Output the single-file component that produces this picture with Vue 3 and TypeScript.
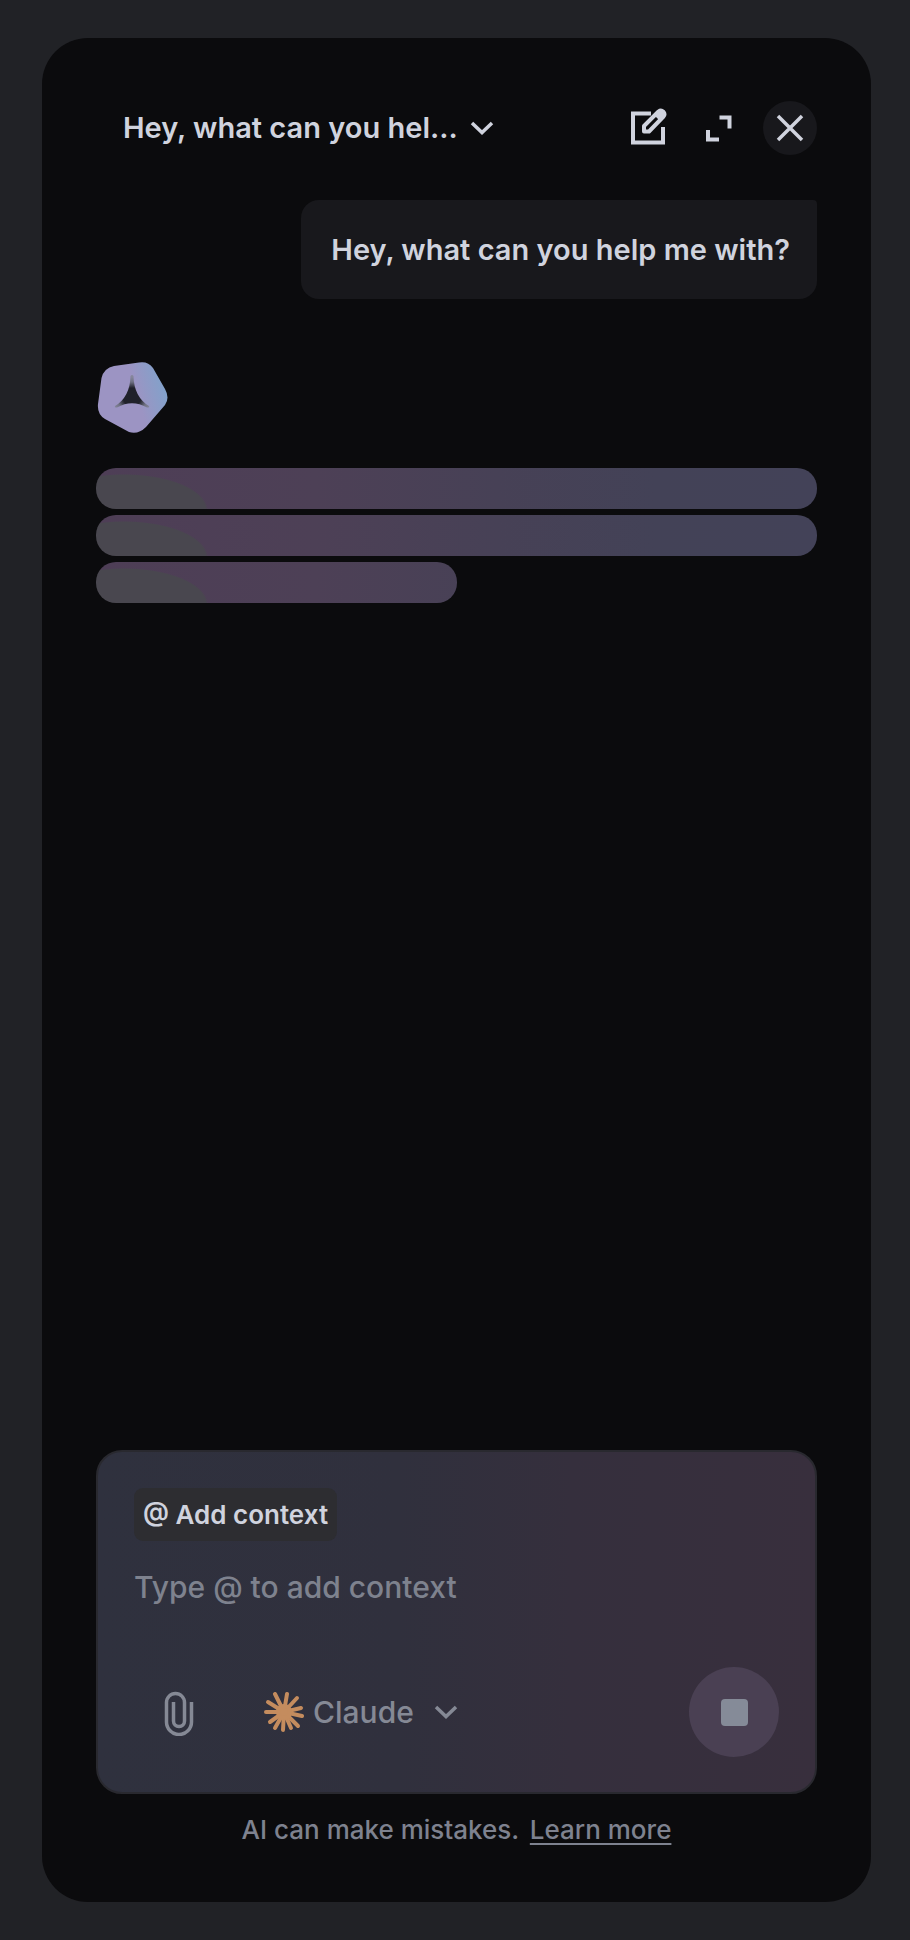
<script setup lang="ts">
import { ref } from 'vue'

const title = 'Hey, what can you hel...'
const messages = ref<string[]>(['Hey, what can you help me with?'])
const placeholders = ['full', 'full', 'half']
const models = ['Claude']
const model = ref('Claude')
const draft = ref('')

// Outer end of each ray in the model mark, measured from its centre
const rays: [number, number][] = [
  [-9, -18], [3, -18], [13, -14], [17, -4], [18, 4], [14, 14],
  [7, 16], [-1, 18], [-9, 16], [-14, 10], [-18, 0], [-16, -10],
]
</script>

<template>
  <main class="panel">
    <header class="header">
      <button class="title" type="button" aria-haspopup="menu">
        <span>{{ title }}</span>
        <svg class="chevron" viewBox="0 0 24 24" aria-hidden="true">
          <path d="M2 7l10 9.500L22 7" />
        </svg>
      </button>
      <div class="actions">
        <button class="icon-button" type="button" aria-label="New chat">
          <svg class="icon-edit" viewBox="0 1 40 40" aria-hidden="true">
            <path d="M23 6.500H5V35.500H35V20" fill="none" stroke="currentColor" stroke-width="4" />
            <path
              d="M16 24.500v-5.500L30.500 4.500q2.500-2 4.800.2 2.200 2.300.2 4.800L21 24.500z"
              fill="none" stroke="currentColor" stroke-width="4" stroke-linejoin="round"
            />
            <path d="M26.500 8.500l5-5q3-1.500 5 .5t.5 5l-5 5z" fill="currentColor" />
          </svg>
        </button>
        <button class="icon-button" type="button" aria-label="Expand">
          <svg class="icon-expand" viewBox="0 0 28 28" aria-hidden="true">
            <path d="M14.500 3.500h10v11M3 16v9.500h11" />
          </svg>
        </button>
        <button class="icon-button close" type="button" aria-label="Close">
          <svg class="icon-close" viewBox="0 0 28 28" aria-hidden="true">
            <path d="M2 2l24 24M26 2L2 26" />
          </svg>
        </button>
      </div>
    </header>

    <section class="thread" aria-label="Conversation">
      <p v-for="(text, i) in messages" :key="i" class="bubble">{{ text }}</p>
      <div class="reply" role="status" aria-label="Loading reply">
        <svg class="avatar" viewBox="0 0 72 72" aria-hidden="true">
          <defs>
            <linearGradient id="avatar-fill" x1="0" y1="0.600" x2="1" y2="0.300">
              <stop offset="0.550" stop-color="#9c94c3" />
              <stop offset="1" stop-color="#7fa3cb" />
            </linearGradient>
            <radialGradient id="avatar-star" gradientUnits="userSpaceOnUse" cx="36" cy="36" r="20">
              <stop offset="0.450" stop-color="#20212a" />
              <stop offset="0.750" stop-color="#6f7183" />
              <stop offset="1" stop-color="#85869b" />
            </radialGradient>
          </defs>
          <path
            d="M18 5L43 1.500Q52 0 57 7L69 28Q74 37 69 44L50 66Q42 74 33 71L9 58Q1 53 2 43L5.500 17Q8 7 18 5Z"
            fill="url(#avatar-fill)"
          />
          <path
            d="M34.500 15Q36 13 37.500 15Q38 36 53 45Q54 47 51 46.500Q36 38 21 46.500Q18 47 19 45Q34 36 34.500 15Z"
            fill="url(#avatar-star)"
          />
        </svg>
        <div class="bars">
          <span v-for="(size, i) in placeholders" :key="i" class="bar" :class="size"></span>
        </div>
      </div>
    </section>

    <footer class="footer">
      <form class="composer" @submit.prevent>
        <button class="chip" type="button">@ Add context</button>
        <textarea
          v-model="draft" class="prompt" rows="1"
          aria-label="Message" placeholder="Type @ to add context"
        ></textarea>
        <div class="toolbar">
          <button class="icon-button attach" type="button" aria-label="Attach file">
            <svg class="icon-clip" viewBox="0 -3 30 48" aria-hidden="true">
              <path d="M27.500 11V31a12.500 12.500 0 0 1-25 0V11.500a9 9 0 0 1 18 0V30a5.500 5.500 0 0 1-11 0V11" />
            </svg>
          </button>
          <label class="model">
            <svg class="icon-model" viewBox="-20 -20 40 40" aria-hidden="true">
              <path v-for="([x, y], i) in rays" :key="i" :d="`M0 0L${x} ${y}`" />
              <circle r="6" />
            </svg>
            <select v-model="model" aria-label="Model">
              <option v-for="name in models" :key="name">{{ name }}</option>
            </select>
            <svg class="chevron" viewBox="0 0 24 24" aria-hidden="true">
              <path d="M2 7l10 9.500L22 7" />
            </svg>
          </label>
          <button class="stop" type="button" aria-label="Stop"><span></span></button>
        </div>
      </form>
      <p class="note">AI can make mistakes. <a href="#">Learn more</a></p>
    </footer>
  </main>
</template>

<style>
html,
body {
  background: #212226;
}
</style>

<style scoped>
.panel {
  box-sizing: border-box;
  display: flex;
  flex-direction: column;
  min-height: calc(100vh - 76px);
  margin: 38px 39px 38px 42px;
  padding: 63px 54px 52px;
  border-radius: 46px;
  background: #0b0b0d;
  color: #d0d3de;
  font-family: Inter, "Liberation Sans", sans-serif;
  font-size: 30px;
  font-weight: 500;
  line-height: 40px;
}

button,
select,
textarea {
  margin: 0;
  padding: 0;
  border: 0;
  background: none;
  color: inherit;
  font: inherit;
}

p {
  margin: 0;
}

svg {
  display: block;
  flex: none;
}

.header {
  display: flex;
  align-items: center;
  justify-content: space-between;
}

.title {
  display: flex;
  align-items: center;
  gap: 12px;
  padding-left: 27px;
  font-size: 29px;
  font-weight: 600;
}

.chevron {
  width: 24px;
  height: 24px;
}

.chevron path,
.icon-expand path,
.icon-close path,
.icon-clip path {
  fill: none;
  stroke: currentColor;
  stroke-width: 3.5;
}

.actions {
  display: flex;
  gap: 17px;
}

.icon-button {
  display: flex;
  align-items: center;
  justify-content: center;
  width: 54px;
  height: 54px;
  border-radius: 50%;
}

.close {
  background: #18181c;
}

.icon-edit {
  width: 40px;
  height: 40px;
}

.icon-expand,
.icon-close {
  width: 28px;
  height: 28px;
}

.icon-expand path {
  stroke-width: 4;
}

.thread {
  display: flex;
  flex: 1;
  flex-direction: column;
  margin-top: 45px;
}

.bubble {
  align-self: flex-end;
  padding: 30px 27px 29px 30px;
  border-radius: 18px 4px 18px 18px;
  background: #18181c;
  font-size: 29px;
  font-weight: 600;
}

.reply {
  margin-top: 62px;
}

.avatar {
  width: 72px;
  height: 72px;
}

.bars {
  display: flex;
  flex-direction: column;
  gap: 6px;
  margin-top: 35px;
}

.bar {
  height: 41px;
  border-radius: 20px;
  background:
    radial-gradient(ellipse 84px 36px at 28px 42px, #49474f 97%, transparent),
    linear-gradient(90deg, #4e3e56, #4d4056 220px, #474156 400px, #434257 560px, #434258);
}

.half {
  width: 50%;
}

.composer {
  display: flex;
  flex-direction: column;
  align-items: flex-start;
  padding: 36px 36px 35px;
  border: 2px solid #29292f;
  border-radius: 26px;
  background: linear-gradient(90deg, #2f313e, #30303d 42%, #352f3d 66%, #382f3d);
}

.chip {
  padding: 7px 9px 6px;
  border-radius: 9px;
  background: #2d2d31;
  font-size: 26px;
  font-weight: 600;
}

.prompt {
  width: 100%;
  height: 40px;
  margin-top: 26px;
  resize: none;
  overflow: hidden;
  outline: 0;
}

.prompt::placeholder {
  color: #7e828e;
  opacity: 1;
}

.toolbar {
  display: flex;
  align-items: center;
  align-self: stretch;
  margin-top: 60px;
  color: #858995;
}

.attach {
  width: 90px;
}

.icon-clip {
  width: 30px;
  height: 48px;
}

.model {
  display: flex;
  align-items: center;
  margin-left: 40px;
}

.model select {
  appearance: none;
  margin: 0 20px 0 9px;
}

.icon-model {
  width: 40px;
  height: 40px;
  fill: #c48c5e;
  stroke: #c48c5e;
  stroke-width: 4;
  stroke-linecap: round;
}

.stop {
  display: flex;
  align-items: center;
  justify-content: center;
  width: 90px;
  height: 90px;
  margin-left: auto;
  border-radius: 50%;
  background: #4a4053;
}

.stop span {
  width: 27px;
  height: 27px;
  border-radius: 4px;
  background: #858b98;
}

.note {
  margin-top: 16px;
  color: #7e828f;
  font-size: 26px;
  text-align: center;
}

.note a {
  margin-left: 4px;
  color: inherit;
  text-decoration-thickness: 2px;
  text-underline-offset: 4px;
}
</style>
